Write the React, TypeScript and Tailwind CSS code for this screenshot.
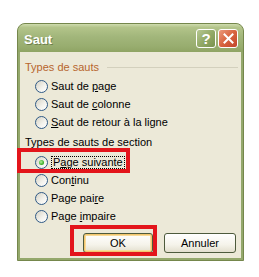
import React from "react";

function Radio({ checked }: { checked?: boolean }) {
  return (
    <span className="relative flex h-[13px] w-[13px] shrink-0 items-center justify-center rounded-full border border-[#2f5a86] bg-[linear-gradient(135deg,#d6d3c4_0%,#f4f3ee_60%,#ffffff_100%)]">
      {checked && (
        <span className="block h-[5px] w-[5px] rounded-full bg-[radial-gradient(circle_at_40%_40%,#b6f0a0_0%,#3fb12c_60%,#1f8a16_100%)]" />
      )}
    </span>
  );
}

function U({ children }: { children: React.ReactNode }) {
  return <span className="underline decoration-1 underline-offset-[1px]">{children}</span>;
}

function Row({
  checked,
  children,
  focus,
}: {
  checked?: boolean;
  children: React.ReactNode;
  focus?: boolean;
}) {
  return (
    <div className="ml-[10px] flex h-[18px] items-center gap-[3px]">
      <Radio checked={checked} />
      <span
        className={
          focus
            ? "border border-dotted border-black px-[1px] leading-[11px]"
            : "leading-[13px]"
        }
      >
        {children}
      </span>
    </div>
  );
}

export default function App() {
  return (
    <div
      className="relative h-[277px] w-[259px] overflow-hidden bg-white pl-[17px] pt-[23px] text-[11px] text-black"
      style={{ fontFamily: '"Liberation Sans", Arial, sans-serif' }}
    >
      {/* window */}
      <div className="flex h-[238px] w-[227px] flex-col rounded-t-[8px] border border-[#75874c] bg-[#94a86c]">
        {/* title bar */}
        <div className="flex h-[28px] shrink-0 items-start rounded-t-[7px] bg-[linear-gradient(to_bottom,#cfdcae_0%,#b3c48a_12%,#a2b67b_45%,#98ad6f_80%,#8fa464_100%)] pl-[6px] pr-[5px]">
          <span className="mt-[9px] text-[13px] font-bold leading-[14px] text-white [text-shadow:1px_1px_0_rgba(80,95,50,0.6)]">
            Saut
          </span>
          <div className="ml-auto mt-[5px] flex gap-[2px]">
            <div className="flex h-[19px] w-[20px] items-center justify-center rounded-[3px] border border-white bg-[linear-gradient(135deg,#b5c791_0%,#93aa68_50%,#7a924f_100%)] text-[15px] font-bold leading-none text-white">
              ?
            </div>
            <div className="flex h-[19px] w-[20px] items-center justify-center rounded-[3px] border border-white bg-[linear-gradient(135deg,#eb9a7c_0%,#d8643f_50%,#c1452b_100%)]">
              <svg width="11" height="11" viewBox="0 0 11 11">
                <path d="M1.5 1.5 L9.5 9.5 M9.5 1.5 L1.5 9.5" stroke="white" strokeWidth="2" strokeLinecap="square" />
              </svg>
            </div>
          </div>
        </div>
        {/* client */}
        <div className="mx-[2px] mb-[2px] flex flex-1 flex-col bg-[#ece9d8] pl-[5px] pr-[3px] pt-[8px]">
          <div className="flex h-[14px] items-center">
            <span className="leading-[14px] text-[#b7652d]">Types de sauts</span>
            <span className="ml-[8px] h-px flex-1 bg-[#d3d0bd]" />
          </div>
          <div className="mt-[3px]">
            <Row>
              Saut de <U>p</U>age
            </Row>
            <Row>
              Saut de <U>c</U>olonne
            </Row>
            <Row>
              <U>S</U>aut de retour à la ligne
            </Row>
          </div>
          <div className="mt-[4px] h-[14px] leading-[14px]">Types de sauts de section</div>
          <div className="mt-[4px]">
            <Row checked focus>
              P<U>a</U>ge suivante
            </Row>
            <Row>
              Con<U>t</U>inu
            </Row>
            <Row>
              Page pai<U>r</U>e
            </Row>
            <Row>
              Page <U>i</U>mpaire
            </Row>
          </div>
          <div className="mt-[8px] flex justify-end gap-[11px] pr-[2px]">
            <button className="relative flex h-[20px] w-[70px] items-center justify-center rounded-[3px] border border-[#4d5a3c] bg-[linear-gradient(to_bottom,#ffffff_0%,#f5f3ea_60%,#e3dfce_100%)] shadow-[inset_0_0_0_1px_#f2c56e,inset_0_0_0_2px_#f8dc9a] leading-none">
              OK
            </button>
            <button className="flex h-[20px] w-[72px] items-center justify-center rounded-[3px] border border-[#4d5a3c] bg-[linear-gradient(to_bottom,#ffffff_0%,#f5f3ea_60%,#e3dfce_100%)] leading-none">
              Annuler
            </button>
          </div>
        </div>
      </div>

      {/* red annotation boxes */}
      <div className="absolute left-[17px] top-[148px] h-[25px] w-[113px] border-[4px] border-[#e3151b]" />
      <div className="absolute left-[70px] top-[225px] h-[31px] w-[87px] border-[4px] border-[#e3151b]" />
    </div>
  );
}
